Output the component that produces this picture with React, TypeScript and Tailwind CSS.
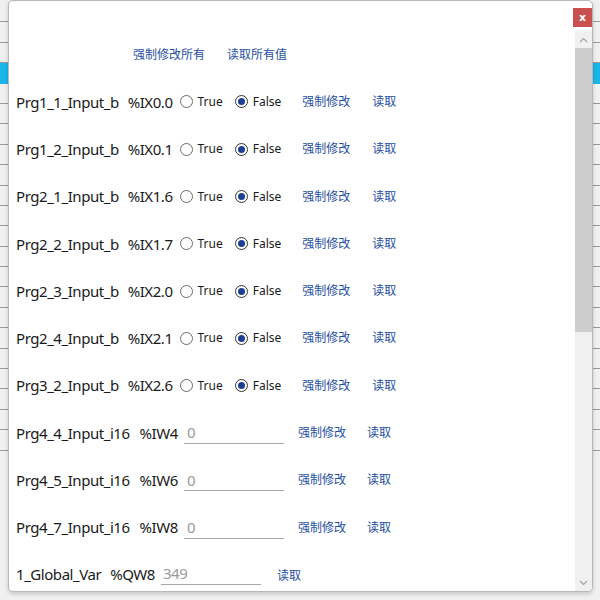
import React from 'react';

const boolRows = [
  ['Prg1_1_Input_b', '%IX0.0'],
  ['Prg1_2_Input_b', '%IX0.1'],
  ['Prg2_1_Input_b', '%IX1.6'],
  ['Prg2_2_Input_b', '%IX1.7'],
  ['Prg2_3_Input_b', '%IX2.0'],
  ['Prg2_4_Input_b', '%IX2.1'],
  ['Prg3_2_Input_b', '%IX2.6'],
];

const intRows = [
  ['Prg4_4_Input_i16', '%IW4', '0'],
  ['Prg4_5_Input_i16', '%IW6', '0'],
  ['Prg4_7_Input_i16', '%IW8', '0'],
];

const font = "font-['Noto_Sans','Noto_Sans_CJK_SC',sans-serif]";

const Link = ({ children }: { children: React.ReactNode }) => (
  <span className="text-[12px] tracking-normal text-[#1f4fa3] cursor-pointer whitespace-nowrap">{children}</span>
);

const Radio = ({ checked, label }: { checked?: boolean; label: string }) => (
  <label className="flex items-center gap-[5px]">
    <span
      className={`w-[13px] h-[13px] rounded-full border flex items-center justify-center bg-white ${
        checked ? 'border-[#333]' : 'border-[#6b6b6b]'
      }`}
    >
      {checked && <span className="w-[7px] h-[7px] rounded-full bg-[#1c3f94]"></span>}
    </span>
    <span className="text-[12px] tracking-normal text-[#1a1a1a]">{label}</span>
  </label>
);

const App = () => {
  const bgRows = Array.from({ length: 22 }, (_, i) => i);

  return (
    <div className={`relative w-[600px] h-[600px] overflow-hidden bg-[#f0f0f0] ${font}`}>
      {/* Page behind the dialog */}
      <div className="flex flex-col pt-[2px]">
        {bgRows.map((i) =>
          i === 3 ? (
            <div key={i} className="h-[20.4px] bg-[#1ab6ea]"></div>
          ) : (
            <div key={i} className="h-[20.4px] border-b border-[#9a9a9a]"></div>
          )
        )}
      </div>

      {/* Dialog */}
      <div className="absolute left-[8px] top-0 w-[585px] h-[592px] bg-white border border-[#b8b8b8] rounded-[5px] shadow-[0_2px_4px_rgba(0,0,0,0.18)] flex flex-col overflow-hidden">
        <div className="relative h-[30px] shrink-0">
          <button className="absolute top-[7px] right-0 w-[19px] h-[19px] bg-[#c9504f] text-white text-[11px] font-bold leading-none flex items-center justify-center font-['DejaVu_Sans',sans-serif]">
            x
          </button>
        </div>

        <div className="flex flex-1 min-h-0">
          {/* Content */}
          <div className="flex-1 pl-[7px] overflow-hidden">
            <div className="h-[47.3px] flex items-center gap-[22px] pl-[117px]">
              <Link>强制修改所有</Link>
              <Link>读取所有值</Link>
            </div>

            {boolRows.map(([name, addr]) => (
              <div key={name} className="h-[47.3px] flex items-center text-[15px] tracking-[-0.45px] text-[#1a1a1a]">
                <span>{name}</span>
                <span className="ml-[9px]">{addr}</span>
                <div className="ml-[7px] flex items-center gap-[12px]">
                  <Radio label="True" />
                  <Radio checked label="False" />
                </div>
                <div className="ml-[21px] flex items-center gap-[22px]">
                  <Link>强制修改</Link>
                  <Link>读取</Link>
                </div>
              </div>
            ))}

            {intRows.map(([name, addr, val]) => (
              <div key={name} className="h-[47.3px] flex items-center text-[15px] tracking-[-0.45px] text-[#1a1a1a]">
                <span>{name}</span>
                <span className="ml-[10px]">{addr}</span>
                <input
                  readOnly
                  defaultValue={val}
                  className="ml-[6px] w-[100px] h-[22px] px-[3px] border-b border-[#a8a8a8] text-[15px] text-[#9a9a9a] outline-none bg-transparent"
                />
                <div className="ml-[14px] flex items-center gap-[21px]">
                  <Link>强制修改</Link>
                  <Link>读取</Link>
                </div>
              </div>
            ))}

            <div className="h-[47.3px] flex items-center text-[15px] tracking-[-0.45px] text-[#1a1a1a] -mt-[1px]">
              <span>1_Global_Var</span>
              <span className="ml-[9px]">%QW8</span>
              <input
                readOnly
                defaultValue="349"
                className="ml-[6px] w-[100px] h-[22px] px-[2px] border-b border-[#a8a8a8] text-[15px] text-[#9a9a9a] outline-none bg-transparent"
              />
              <div className="ml-[16px]">
                <Link>读取</Link>
              </div>
            </div>
          </div>

          {/* Scrollbar */}
          <div className="w-[17px] shrink-0 bg-[#f0f0f0] flex flex-col">
            <div className="h-[17px] flex items-center justify-center">
              <svg width="9" height="6" viewBox="0 0 9 6">
                <polyline points="1,5 4.5,1.5 8,5" fill="none" stroke="#a3a3a3" strokeWidth="1.2" />
              </svg>
            </div>
            <div className="h-[284px] bg-[#cdcdcd]"></div>
            <div className="flex-1"></div>
            <div className="h-[17px] flex items-center justify-center">
              <svg width="9" height="6" viewBox="0 0 9 6">
                <polyline points="1,1 4.5,4.5 8,1" fill="none" stroke="#a3a3a3" strokeWidth="1.2" />
              </svg>
            </div>
          </div>
        </div>
      </div>
    </div>
  );
};

export default App;
